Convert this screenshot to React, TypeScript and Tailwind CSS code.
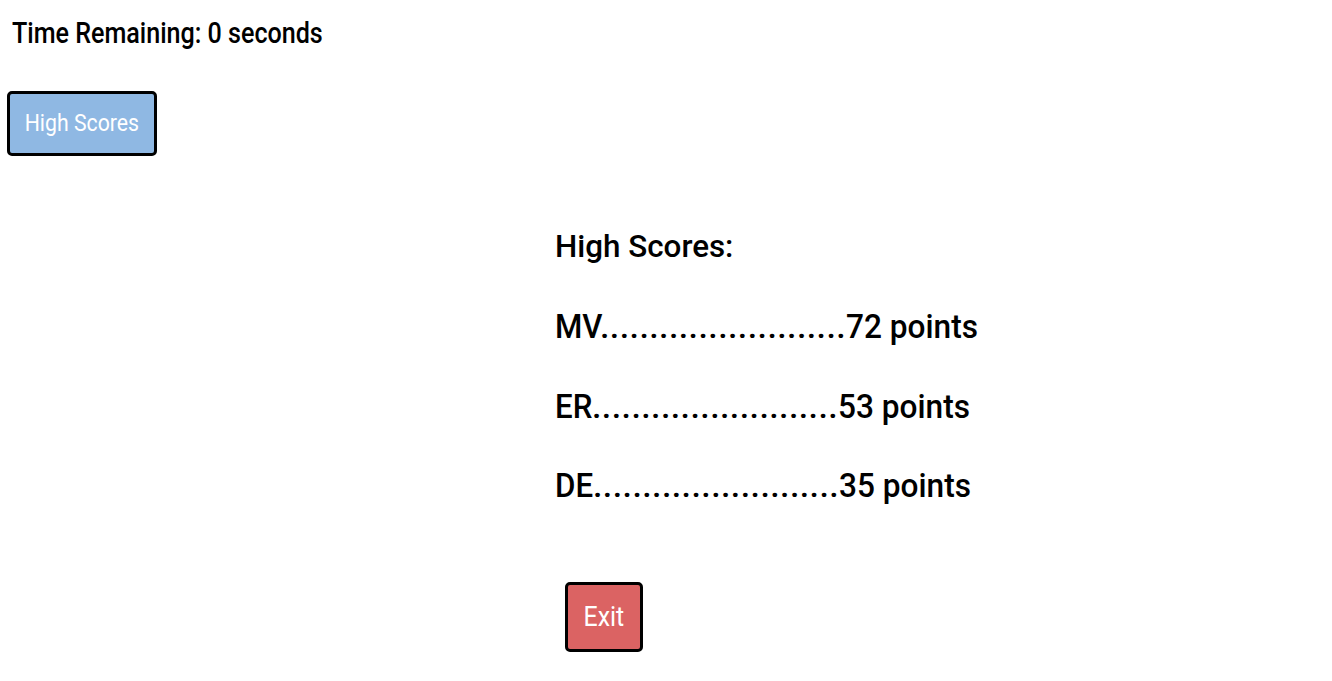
const scores = [
  { name: "MV", nameWidth: "w-[45px]", points: 72 },
  { name: "ER", nameWidth: "w-[37px]", points: 53 },
  { name: "DE", nameWidth: "w-[38px]", points: 35 },
];

const rowGap = ["mt-[40px]", "mt-[40px]", "mt-[39px]"];

// Roboto squeezed sideways stands in for the condensed face
function Squeeze({ className, children }: { className: string; children: React.ReactNode }) {
  return <span className={"inline-block whitespace-nowrap " + className}>{children}</span>;
}

export default function App() {
  return (
    <div
      className="min-h-screen bg-white text-black"
      style={{ fontFamily: "Roboto, 'Liberation Sans', sans-serif" }}
    >
      <div className="pl-[12px] pt-[16px] text-[29px] font-medium leading-[34px]">
        <Squeeze className="origin-left scale-x-[0.865]">Time Remaining: 0 seconds</Squeeze>
      </div>

      <button className="ml-[7px] mt-[41px] flex h-[65px] w-[150px] items-center justify-center rounded-[5px] border-[3px] border-black bg-[#8fb8e3] text-[23px] leading-none text-white">
        <Squeeze className="origin-center scale-x-[0.924]">High Scores</Squeeze>
      </button>

      <div className="ml-[555px] mt-[70px] flex flex-col">
        <div className="text-[32px] font-medium leading-[40px]">
          <Squeeze className="origin-left scale-x-[0.98]">High Scores:</Squeeze>
        </div>

        {scores.map((s, i) => (
          <div
            key={s.name}
            className={"whitespace-nowrap text-[34px] font-medium leading-[40px] " + rowGap[i]}
          >
            <span className={"inline-block " + s.nameWidth}>
              <Squeeze className="origin-left scale-x-[0.92]">{s.name}</Squeeze>
            </span>
            <span className="tracking-[0.4px]">.........................</span>
            <Squeeze className="origin-left scale-x-[0.93]">{s.points} points</Squeeze>
          </div>
        ))}

        <button className="ml-[10px] mt-[77px] flex h-[70px] w-[78px] items-center justify-center rounded-[5px] border-[3px] border-black bg-[#db6363] text-[28px] leading-none text-white">
          <Squeeze className="origin-center scale-x-[0.89]">Exit</Squeeze>
        </button>
      </div>
    </div>
  );
}
